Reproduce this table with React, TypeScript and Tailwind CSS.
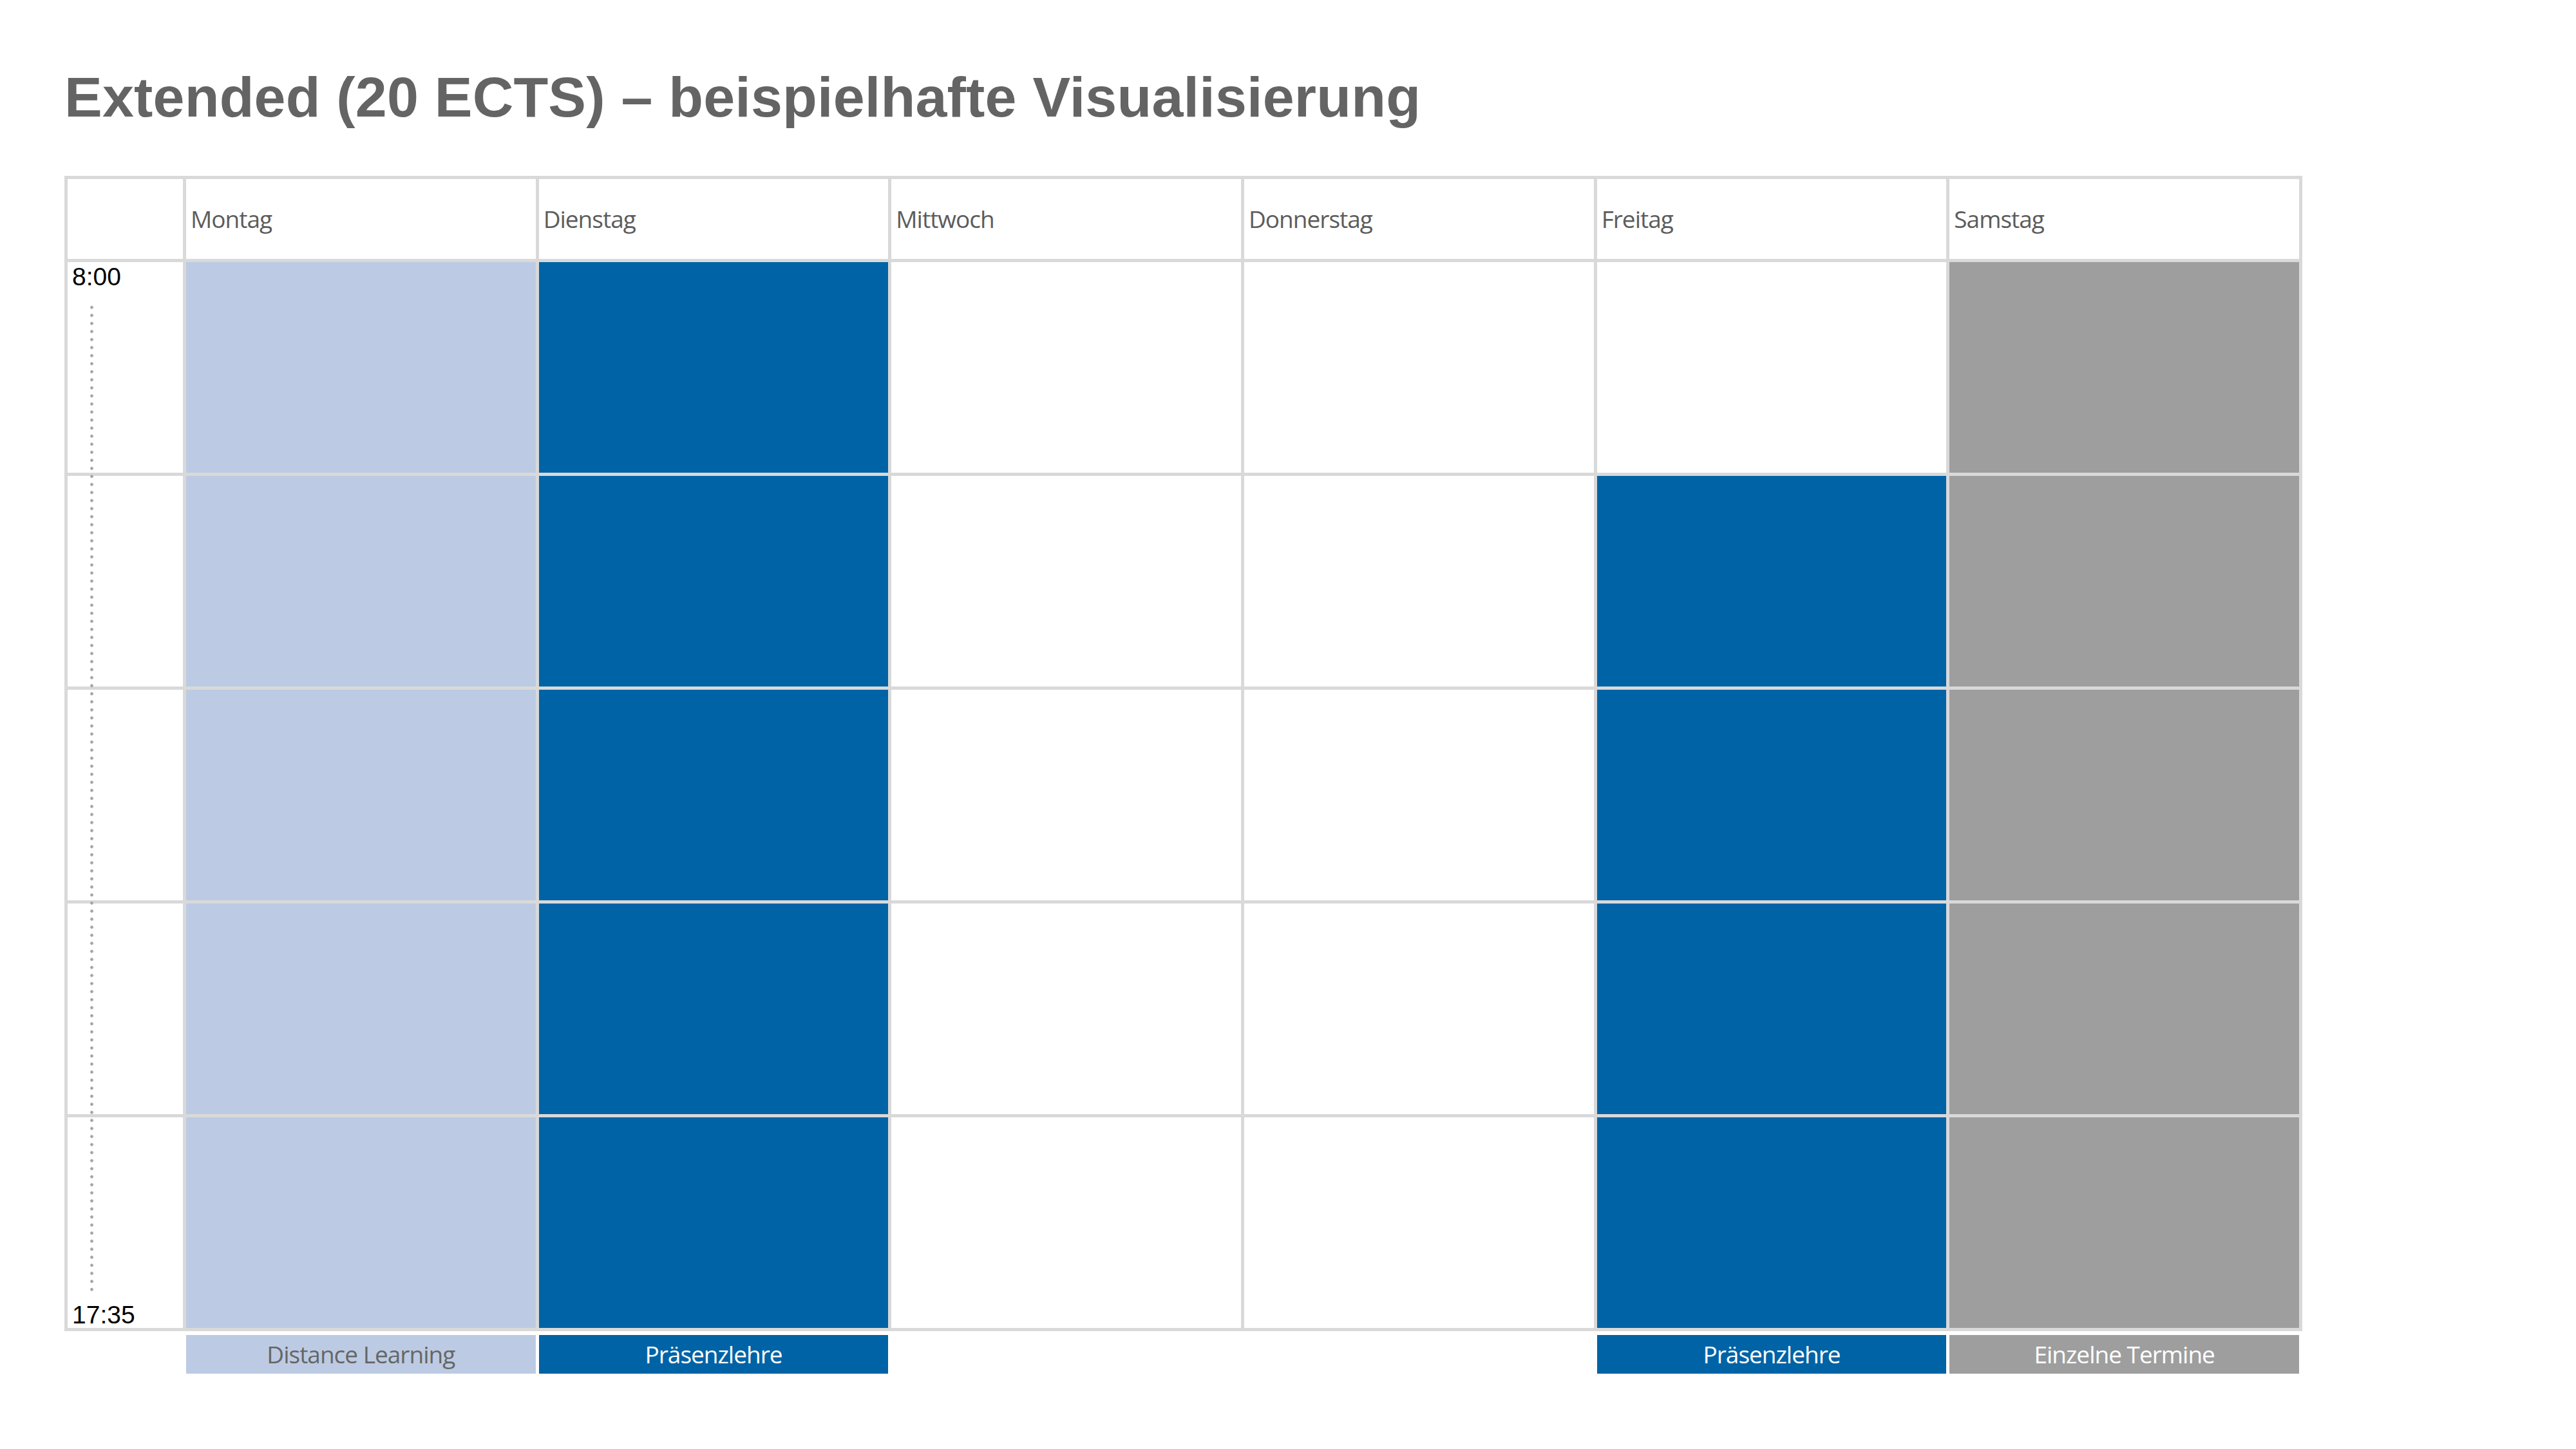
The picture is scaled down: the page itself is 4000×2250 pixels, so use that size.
const days = ['Montag', 'Dienstag', 'Mittwoch', 'Donnerstag', 'Freitag', 'Samstag'];

type Slot = 'distance' | 'praesenz' | 'termine' | 'frei';

// one entry per day, five time blocks each
const plan: Slot[][] = [
  ['distance', 'distance', 'distance', 'distance', 'distance'],
  ['praesenz', 'praesenz', 'praesenz', 'praesenz', 'praesenz'],
  ['frei', 'frei', 'frei', 'frei', 'frei'],
  ['frei', 'frei', 'frei', 'frei', 'frei'],
  ['frei', 'praesenz', 'praesenz', 'praesenz', 'praesenz'],
  ['termine', 'termine', 'termine', 'termine', 'termine'],
];

const slotBg: Record<Slot, string> = {
  distance: 'bg-[#bccbe3]',
  praesenz: 'bg-[#0063a6]',
  termine: 'bg-[#9e9e9e]',
  frei: 'bg-white',
};

const legend: ({ label: string; slot: Slot } | null)[] = [
  { label: 'Distance Learning', slot: 'distance' },
  { label: 'Präsenzlehre', slot: 'praesenz' },
  null,
  null,
  { label: 'Präsenzlehre', slot: 'praesenz' },
  { label: 'Einzelne Termine', slot: 'termine' },
];

const sans = "font-['Open_Sans','Noto_Sans',sans-serif]";
const arial = "font-['Liberation_Sans',Arial,sans-serif]";

export default function App() {
  return (
    <div className="w-[4000px] h-[2250px] bg-white pl-[100px] pt-[107px]">
      <h1 className={`${arial} text-[88px] leading-none font-bold tracking-[0.2px] text-[#646464]`}>
        Extended (20 ECTS) – beispielhafte Visualisierung
      </h1>

      <div className="relative mt-[78px] grid w-[3475px] grid-cols-[179px_repeat(6,1fr)] grid-rows-[124px_repeat(5,327px)] gap-[5px] border-[5px] border-[#d9d9d9] bg-[#d9d9d9]">
        <div className="bg-white" />
        {days.map((day) => (
          <div key={day} className={`${sans} flex items-center bg-white pl-[7px] text-[37px] tracking-[-1px] text-[#5c5c5c]`}>
            {day}
          </div>
        ))}

        {[0, 1, 2, 3, 4].map((row) => (
          <>
            <div
              key={`t${row}`}
              className={`${arial} flex bg-white pl-[7px] text-[39px] leading-none text-black ${
                row === 0 ? 'items-start pt-[3px]' : 'items-end pb-[1px]'
              }`}
            >
              {row === 0 ? '8:00' : row === 4 ? '17:35' : ''}
            </div>
            {plan.map((col, d) => (
              <div key={`c${row}-${d}`} className={slotBg[col[row]]} />
            ))}
          </>
        ))}

        {/* dotted time axis, drawn over the row lines */}
        <div className="absolute left-[35px] top-[193px] h-[1535px] w-[5px] bg-[radial-gradient(circle,#a3a3a3_2px,transparent_2.6px)] bg-[length:5px_12.5px]" />
      </div>

      <div className="mt-[6px] grid h-[60px] w-[3475px] grid-cols-[179px_repeat(6,1fr)] gap-[5px] px-[5px]">
        <div />
        {legend.map((item, i) =>
          item ? (
            <div
              key={i}
              className={`${sans} ${slotBg[item.slot]} flex items-center justify-center text-[37px] tracking-[-1px] ${
                item.slot === 'distance' ? 'text-[#666666]' : 'text-white'
              }`}
            >
              {item.label}
            </div>
          ) : (
            <div key={i} />
          )
        )}
      </div>
    </div>
  );
}
